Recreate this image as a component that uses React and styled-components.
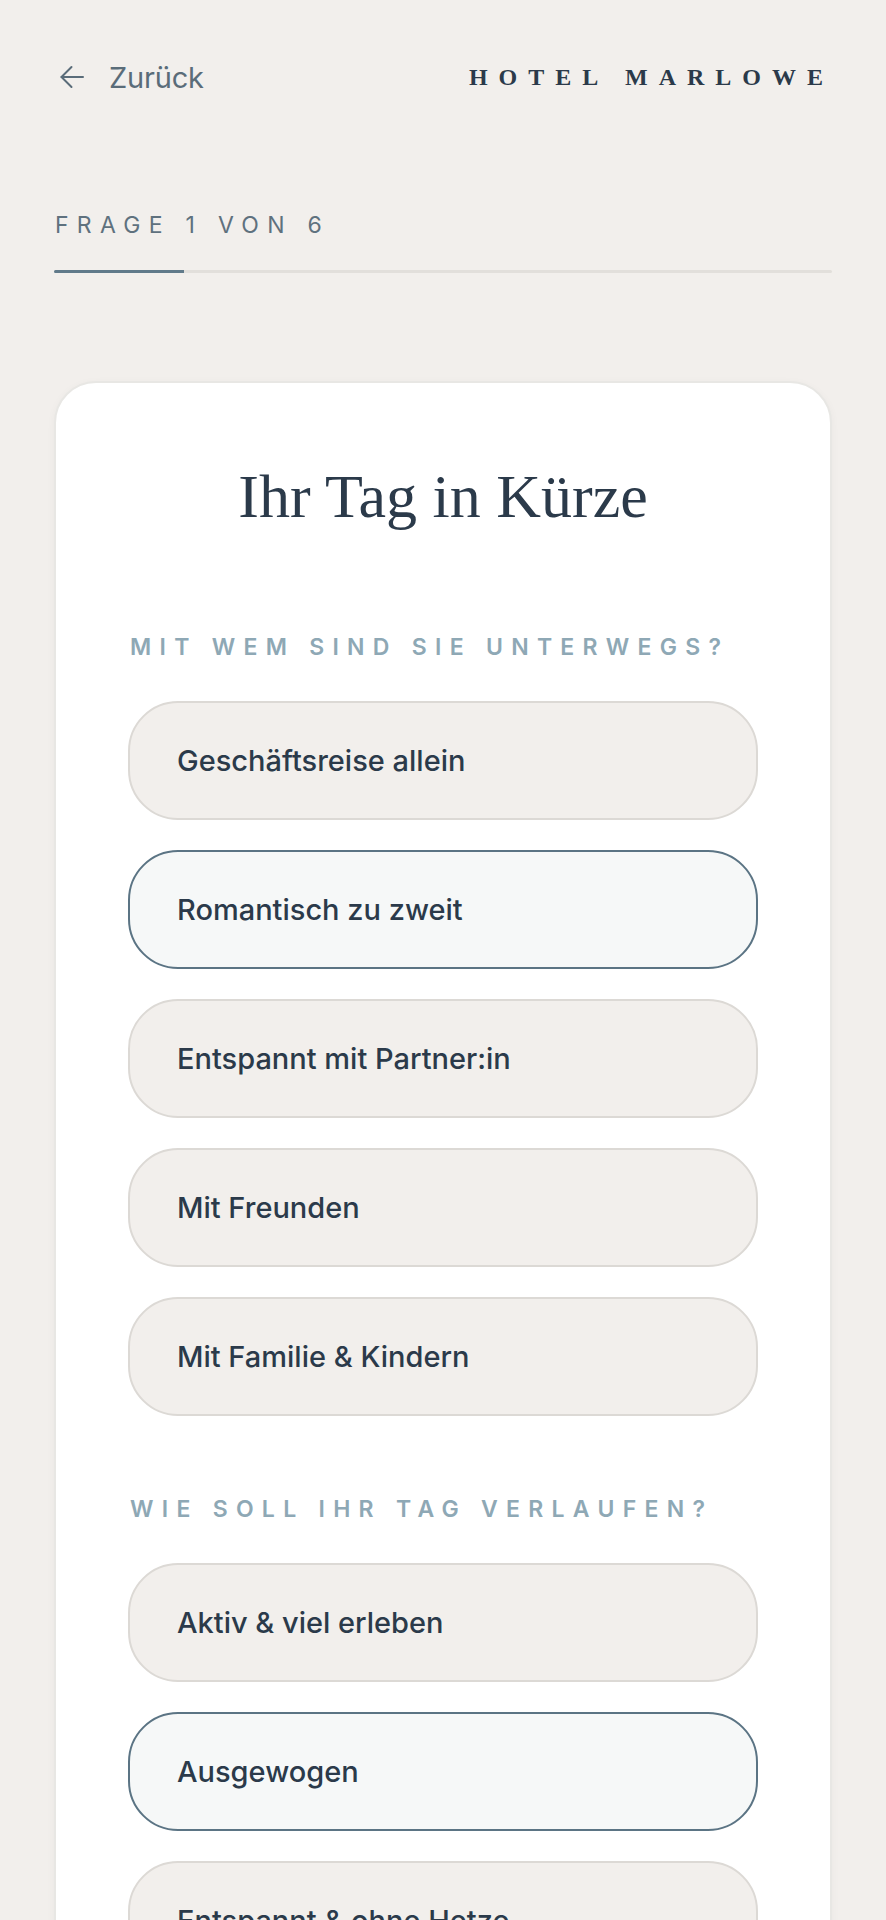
import styled, { createGlobalStyle } from "styled-components"

const GlobalStyle = createGlobalStyle`
  body {
    margin: 0;
    background: #f2efec;
    font-family: "Inter", "Liberation Sans", sans-serif;
    color: #2b3a4a;
  }
  * { box-sizing: border-box; }
`

const Page = styled.div`
  padding: 60px 54px 80px;
`

const Header = styled.header`
  display: flex;
  justify-content: space-between;
  align-items: center;
  height: 34px;
`

const BackLink = styled.a`
  display: flex;
  align-items: center;
  gap: 25px;
  padding-left: 6px;
  font-size: 29px;
  font-weight: 400;
  color: #5a6c79;
  text-decoration: none;
  letter-spacing: -0.2px;
`

const Brand = styled.div`
  font-family: "Liberation Serif", serif;
  font-weight: 700;
  font-size: 24px;
  letter-spacing: 11px;
  color: #2b3a4a;
  margin-right: -2px;
`

const Progress = styled.div`
  margin-top: 117px;
`

const StepLabel = styled.div`
  font-size: 23px;
  letter-spacing: 0.36em;
  color: #5f717e;
  line-height: 28px;
  padding-left: 1px;
`

const Track = styled.div`
  margin-top: 31px;
  height: 3px;
  background: #e2dfdb;
  border-radius: 2px;
  overflow: hidden;
`

const Fill = styled.div`
  height: 3px;
  background: #617a8a;
`

const Card = styled.section`
  margin-top: 108px;
  background: #ffffff;
  border: 2px solid #e8e7e4;
  border-radius: 42px;
  padding: 76px 72px 60px;
  box-shadow: 0 2px 8px rgba(40, 50, 60, 0.04);
`

const Title = styled.h1`
  margin: 0 0 100px;
  text-align: center;
  font-family: "Liberation Serif", serif;
  font-weight: 400;
  font-size: 62px;
  line-height: 74px;
  color: #2b3a4a;
`

const Group = styled.div`
  & + & {
    margin-top: 79px;
  }
`

const Question = styled.h2`
  margin: 0 0 39px;
  font-size: 23px;
  font-weight: 600;
  line-height: 29px;
  letter-spacing: 0.36em;
  color: #8ea8b5;
  padding-left: 2px;
`

const Options = styled.div`
  display: flex;
  flex-direction: column;
  gap: 30px;
`

const Option = styled.button`
  display: flex;
  align-items: center;
  height: 119px;
  padding: 0 47px;
  border-radius: 50px;
  border: 2px solid ${(p) => (p.$selected ? "#5b7484" : "#dcd9d5")};
  background: ${(p) => (p.$selected ? "#f6f8f8" : "#f2efec")};
  font-family: "Inter", "Liberation Sans", sans-serif;
  font-size: 29px;
  font-weight: 500;
  color: #2b3a4a;
  text-align: left;
  cursor: pointer;
`

const ArrowIcon = () => (
  <svg width="24" height="24" viewBox="0 0 24 24" fill="none" stroke="currentColor" strokeWidth="2" strokeLinecap="round" strokeLinejoin="round">
    <path d="M23 12H1.5" />
    <path d="M11.5 2 1.5 12l10 10" />
  </svg>
)

const groups = [
  {
    question: "Mit wem sind Sie unterwegs?",
    options: [
      "Geschäftsreise allein",
      "Romantisch zu zweit",
      "Entspannt mit Partner:in",
      "Mit Freunden",
      "Mit Familie & Kindern",
    ],
    selected: 1,
  },
  {
    question: "Wie soll Ihr Tag verlaufen?",
    options: ["Aktiv & viel erleben", "Ausgewogen", "Entspannt & ohne Hetze"],
    selected: 1,
  },
]

const App = () => {
  return (
    <Page>
      <GlobalStyle />
      <Header>
        <BackLink href="#">
          <ArrowIcon />
          Zurück
        </BackLink>
        <Brand>HOTEL MARLOWE</Brand>
      </Header>
      <Progress>
        <StepLabel>FRAGE 1 VON 6</StepLabel>
        <Track>
          <Fill style={{ width: `${(1 / 6) * 100}%` }} />
        </Track>
      </Progress>
      <Card>
        <Title>Ihr Tag in Kürze</Title>
        {groups.map((g) => (
          <Group key={g.question}>
            <Question>{g.question.toUpperCase()}</Question>
            <Options>
              {g.options.map((o, i) => (
                <Option key={o} $selected={i === g.selected}>
                  {o}
                </Option>
              ))}
            </Options>
          </Group>
        ))}
      </Card>
    </Page>
  )
}

export default App
